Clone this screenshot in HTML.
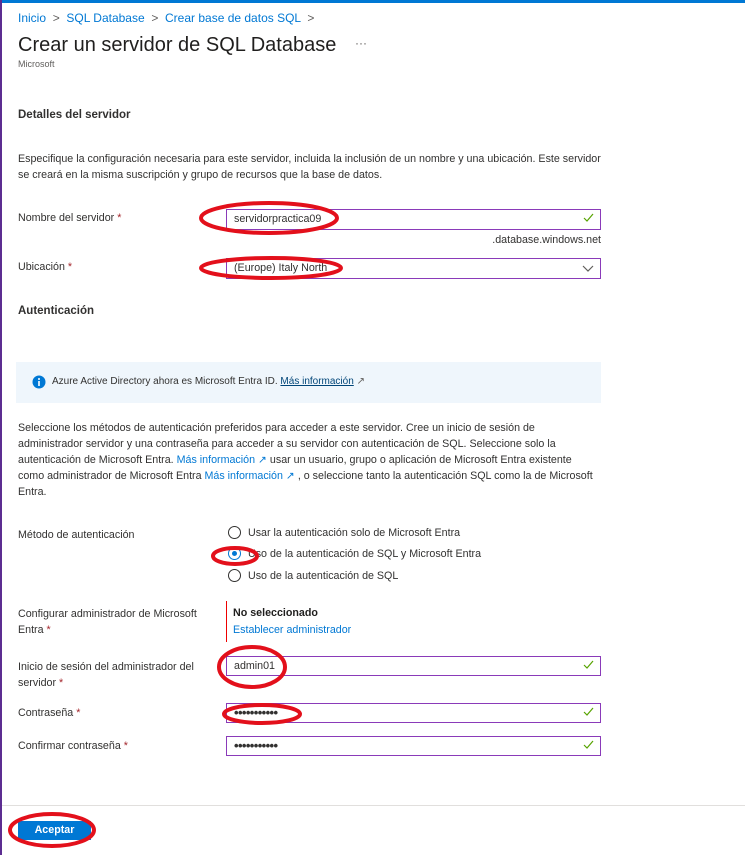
<!DOCTYPE html>
<html><head><meta charset="utf-8"><style>
*{margin:0;padding:0;box-sizing:border-box}
body{width:745px;height:855px;background:#fff;font-family:"Liberation Sans",sans-serif;font-size:10.7px;color:#323130;position:relative;overflow:hidden}
.a{position:absolute;white-space:nowrap}
.lnk{color:#0078d4}
.req{color:#a4262c}
.in{position:absolute;left:226px;width:375px;border:1px solid #8a3ab9;background:#fff;padding-left:7px;font-size:10.7px;color:#323130}
.ck{position:absolute;right:6px;top:3px}
.rd{position:absolute;width:13px;height:13px;border:1px solid #323130;border-radius:50%;left:228px}
.pw{font-size:13px;letter-spacing:-0.6px;font-weight:bold}
</style></head><body>
<div class="a" style="left:0;top:0;width:745px;height:3px;background:#0078d4"></div>
<div class="a" style="left:0;top:0;width:2px;height:855px;background:#5c2d91"></div>

<div class="a lnk" style="left:18px;top:11px;font-size:12px">Inicio <span style="color:#605e5c">&nbsp;&gt;&nbsp;</span> SQL Database <span style="color:#605e5c">&nbsp;&gt;&nbsp;</span> Crear base de datos SQL <span style="color:#605e5c">&nbsp;&gt;</span></div>
<div class="a" style="left:18px;top:34px;font-size:20px;color:#201f1e">Crear un servidor de SQL Database</div>
<div class="a" style="left:355px;top:36px;font-size:12px;color:#605e5c">···</div>
<div class="a" style="left:18px;top:59px;font-size:9px;color:#605e5c">Microsoft</div>

<div class="a" style="left:18px;top:109px;font-size:11.5px;font-weight:bold;color:#323130">Detalles del servidor</div>
<div class="a" style="left:18px;top:151px;line-height:16px">Especifique la configuración necesaria para este servidor, incluida la inclusión de un nombre y una ubicación. Este servidor<br>se creará en la misma suscripción y grupo de recursos que la base de datos.</div>

<div class="a" style="left:18px;top:212px">Nombre del servidor <span class="req">*</span></div>
<div class="in" style="top:209px;height:21px;line-height:19px">servidorpractica09<svg class="ck" width="11" height="10" viewBox="0 0 11 10"><path d="M1 5l3 3 6-7" stroke="#57a300" stroke-width="1.2" fill="none"/></svg></div>
<div class="a" style="left:455px;top:234px;width:146px;text-align:right">.database.windows.net</div>

<div class="a" style="left:18px;top:261px">Ubicación <span class="req">*</span></div>
<div class="in" style="top:258px;height:21px;line-height:19px">(Europe) Italy North<svg class="ck" style="top:6px" width="12" height="8" viewBox="0 0 12 8"><path d="M1 1l5 5 5-5" stroke="#605e5c" stroke-width="1.2" fill="none"/></svg></div>

<div class="a" style="left:18px;top:305px;font-size:11.5px;font-weight:bold">Autenticación</div>

<div class="a" style="left:16px;top:362px;width:585px;height:41px;background:#eff6fc"></div>
<svg class="a" style="left:32px;top:375px" width="14" height="14" viewBox="0 0 14 14"><circle cx="7" cy="7" r="6.5" fill="#0078d4"/><rect x="6.2" y="6" width="1.6" height="5" fill="#fff"/><circle cx="7" cy="4" r="1" fill="#fff"/></svg>
<div class="a" style="left:52px;top:376px;font-size:10px">Azure Active Directory ahora es Microsoft Entra ID. <span style="text-decoration:underline;color:#004578">Más información</span> <span style="color:#605e5c">↗</span></div>

<div class="a" style="left:18px;top:420px;line-height:16px">Seleccione los métodos de autenticación preferidos para acceder a este servidor. Cree un inicio de sesión de<br>administrador servidor y una contraseña para acceder a su servidor con autenticación de SQL. Seleccione solo la<br>autenticación de Microsoft Entra. <span class="lnk">Más información ↗</span> usar un usuario, grupo o aplicación de Microsoft Entra existente<br>como administrador de Microsoft Entra <span class="lnk">Más información ↗</span> , o seleccione tanto la autenticación SQL como la de Microsoft<br>Entra.</div>

<div class="a" style="left:18px;top:529px">Método de autenticación</div>
<div class="rd" style="top:526px"></div>
<div class="a" style="left:248px;top:527px">Usar la autenticación solo de Microsoft Entra</div>
<div class="rd" style="top:547px;border-color:#0078d4"><div style="position:absolute;left:3px;top:3px;width:5px;height:5px;border-radius:50%;background:#0078d4"></div></div>
<div class="a" style="left:248px;top:548px">Uso de la autenticación de SQL y Microsoft Entra</div>
<div class="rd" style="top:569px"></div>
<div class="a" style="left:248px;top:570px">Uso de la autenticación de SQL</div>

<div class="a" style="left:18px;top:606px;line-height:16px">Configurar administrador de Microsoft<br>Entra <span class="req">*</span></div>
<div class="a" style="left:226px;top:601px;width:1px;height:41px;background:#e00"></div>
<div class="a" style="left:233px;top:607px;font-weight:bold;color:#201f1e">No seleccionado</div>
<div class="a lnk" style="left:233px;top:624px">Establecer administrador</div>

<div class="a" style="left:18px;top:659px;line-height:16px">Inicio de sesión del administrador del<br>servidor <span class="req">*</span></div>
<div class="in" style="top:656px;height:20px;line-height:18px">admin01<svg class="ck" width="11" height="10" viewBox="0 0 11 10"><path d="M1 5l3 3 6-7" stroke="#57a300" stroke-width="1.2" fill="none"/></svg></div>

<div class="a" style="left:18px;top:707px">Contraseña <span class="req">*</span></div>
<div class="in" style="top:703px;height:20px;line-height:18px"><span class="pw">•••••••••••</span><svg class="ck" width="11" height="10" viewBox="0 0 11 10"><path d="M1 5l3 3 6-7" stroke="#57a300" stroke-width="1.2" fill="none"/></svg></div>

<div class="a" style="left:18px;top:740px">Confirmar contraseña <span class="req">*</span></div>
<div class="in" style="top:736px;height:20px;line-height:18px"><span class="pw">•••••••••••</span><svg class="ck" width="11" height="10" viewBox="0 0 11 10"><path d="M1 5l3 3 6-7" stroke="#57a300" stroke-width="1.2" fill="none"/></svg></div>

<div class="a" style="left:2px;top:805px;width:743px;height:1px;background:#e1dfdd"></div>
<div class="a" style="left:18px;top:821px;width:73px;height:19px;background:#0078d4;color:#fff;font-weight:bold;text-align:center;line-height:19px">Aceptar</div>

<svg class="a" style="left:0;top:0" width="745" height="855">
<g fill="none" stroke="#e3101b" stroke-width="4">
<ellipse cx="269" cy="218" rx="68" ry="15"/>
<ellipse cx="271" cy="268" rx="70" ry="10"/>
<ellipse cx="235" cy="556" rx="22" ry="8"/>
<ellipse cx="252" cy="667" rx="33" ry="20"/>
<ellipse cx="262" cy="714" rx="38" ry="9"/>
<ellipse cx="52" cy="830" rx="42" ry="16"/>
</g></svg>
</body></html>
